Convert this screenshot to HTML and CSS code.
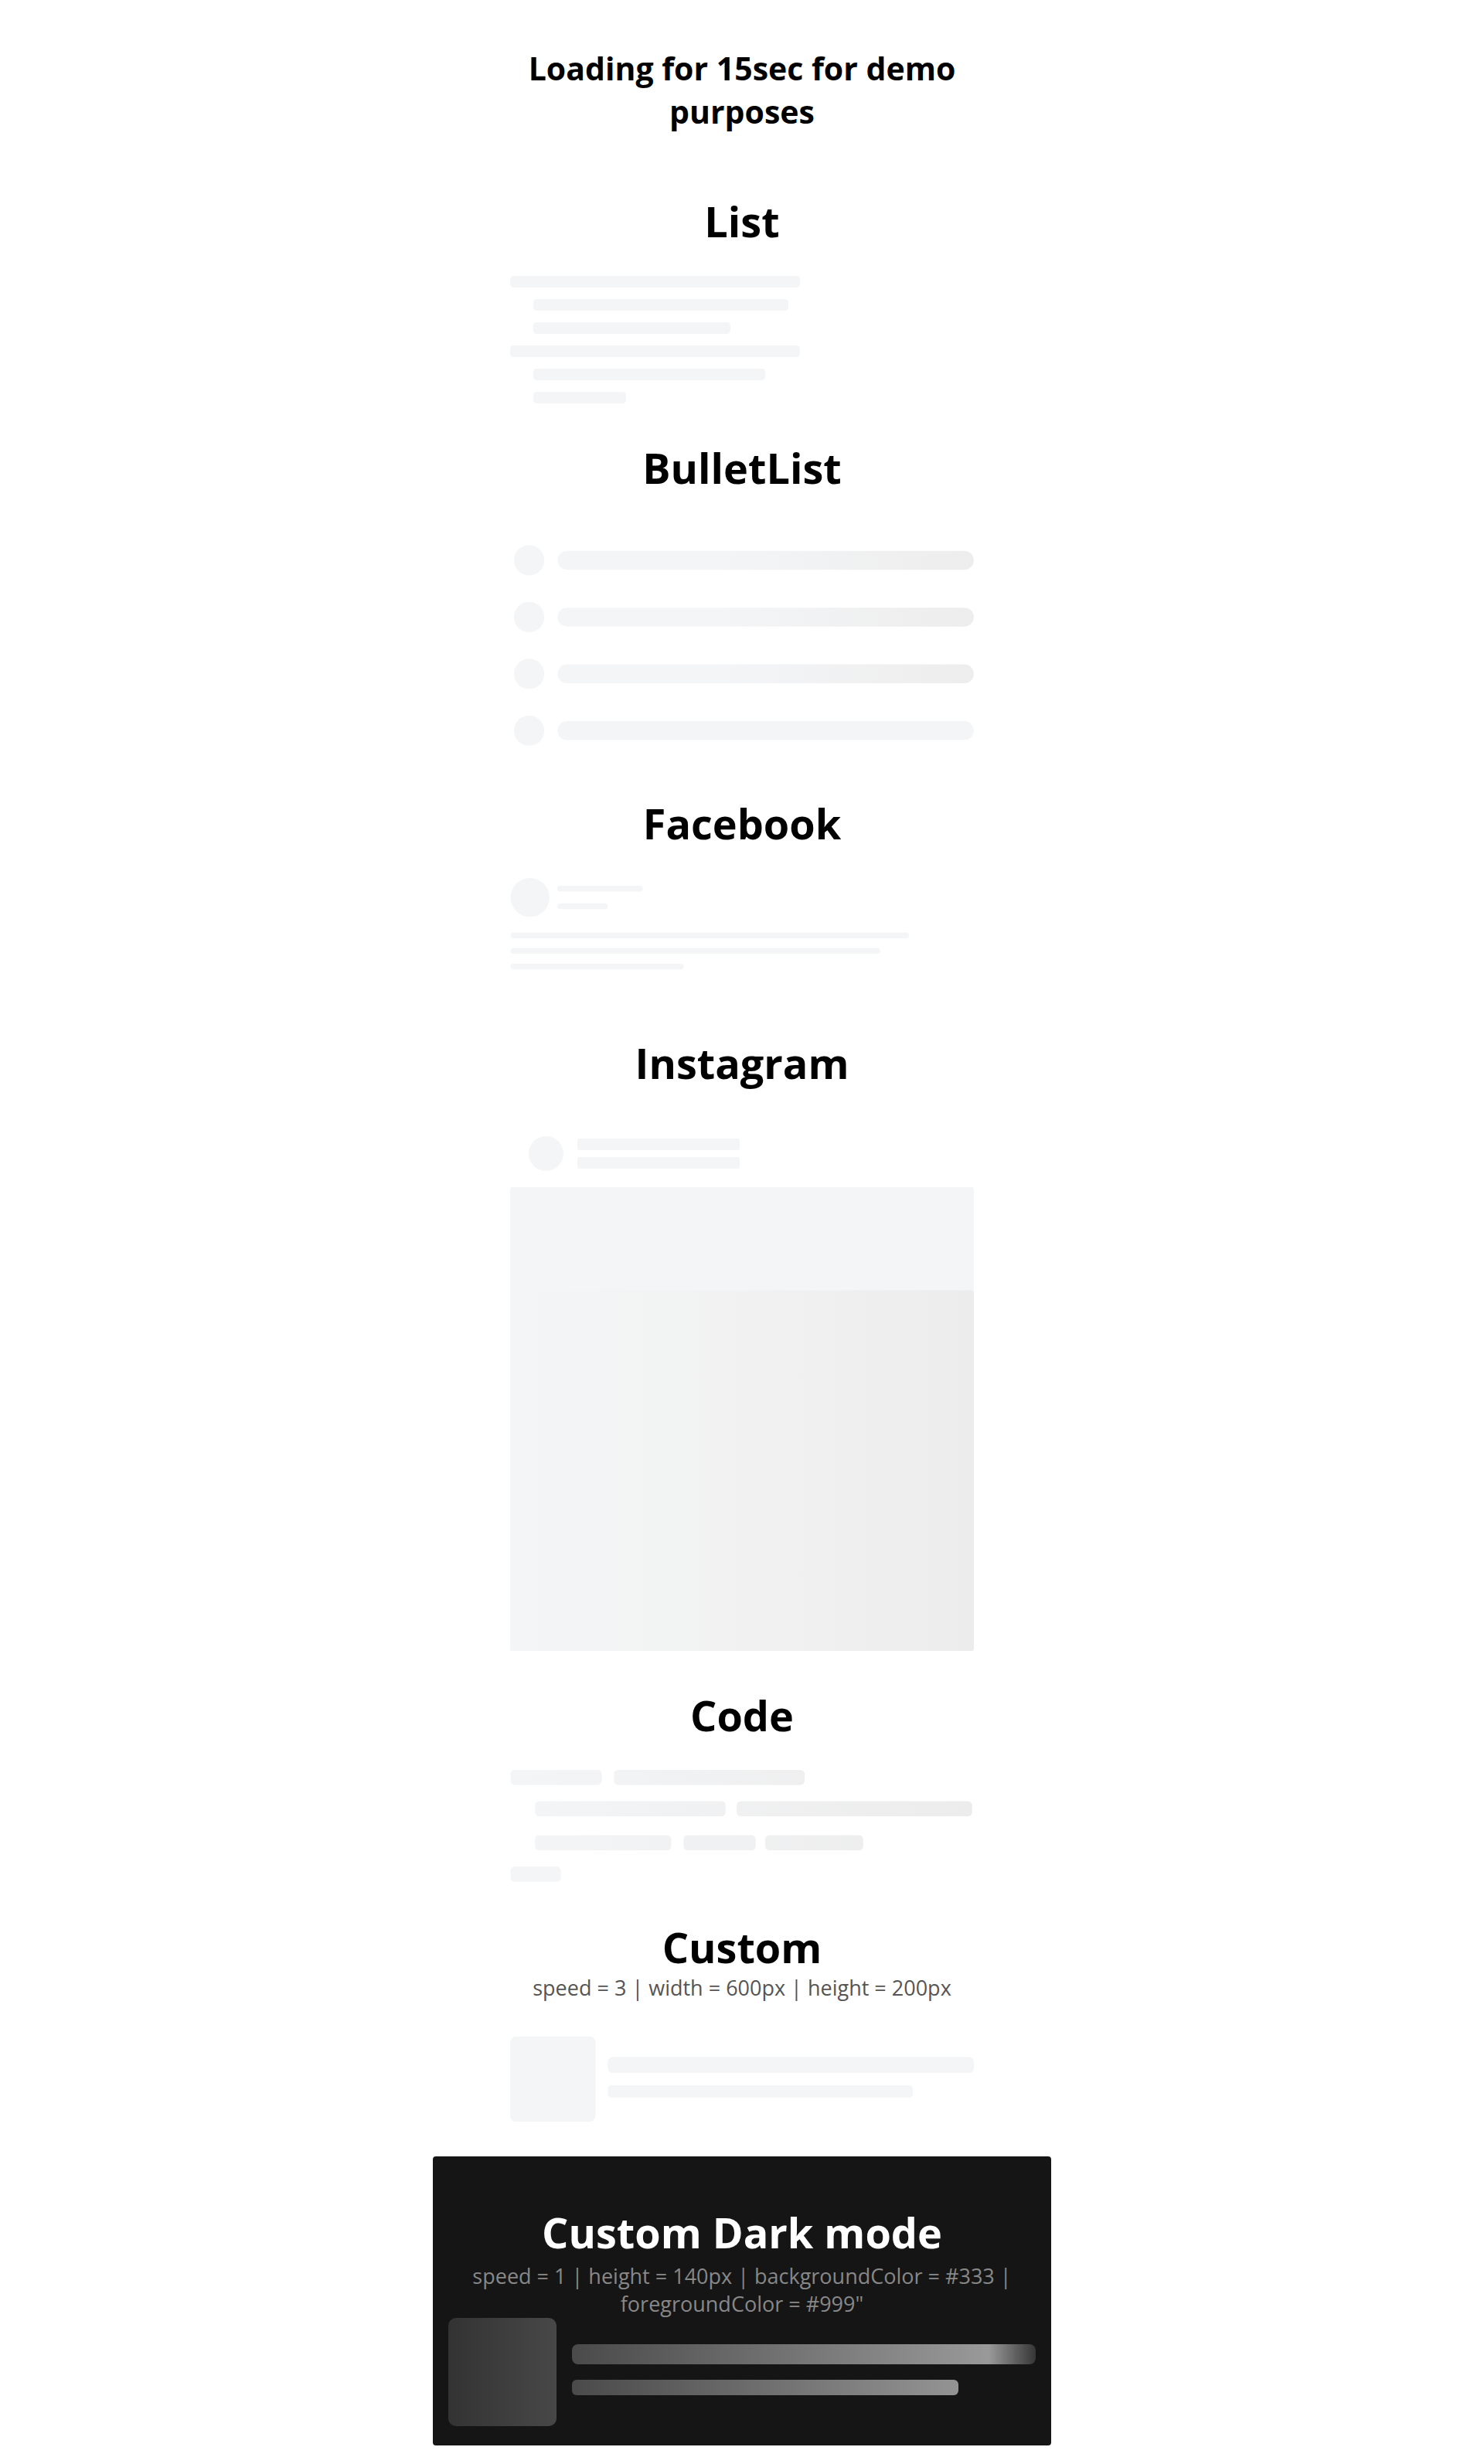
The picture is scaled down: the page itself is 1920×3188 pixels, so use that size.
FILE: index.html
```
<!doctype html>
<html>
    <head>
        <meta charset="utf-8">
        <title>Content loader demo</title>
        <link rel="stylesheet" href="styles.css">
    </head>
    <body>
        <div class="page">
            <h1 class="page-title">Loading for 15sec for demo purposes</h1>

            <div class="demo">
                <h2>List</h2>
                <svg class="loader loader-list" viewBox="0 0 400 110">
                    <rect x="0" y="0" rx="3" ry="3" width="250" height="10" />
                    <rect x="20" y="20" rx="3" ry="3" width="220" height="10" />
                    <rect x="20" y="40" rx="3" ry="3" width="170" height="10" />
                    <rect x="0" y="60" rx="3" ry="3" width="250" height="10" />
                    <rect x="20" y="80" rx="3" ry="3" width="200" height="10" />
                    <rect x="20" y="100" rx="3" ry="3" width="80" height="10" />
                </svg>
            </div>

            <div class="demo">
                <h2>BulletList</h2>
                <svg class="loader loader-bullets" viewBox="0 0 245 125">
                    <defs>
                        <linearGradient id="bulletShine" gradientUnits="userSpaceOnUse" x1="110" y1="0" x2="245" y2="0">
                            <stop offset="0" stop-color="#f4f5f7" />
                            <stop offset="1" stop-color="#ededed" />
                        </linearGradient>
                    </defs>
                    <circle cx="10" cy="20" r="8" />
                    <rect class="shine-bullet" x="25" y="15" rx="5" ry="5" width="220" height="10" />
                    <circle cx="10" cy="50" r="8" />
                    <rect class="shine-bullet" x="25" y="45" rx="5" ry="5" width="220" height="10" />
                    <circle cx="10" cy="80" r="8" />
                    <rect class="shine-bullet" x="25" y="75" rx="5" ry="5" width="220" height="10" />
                    <circle cx="10" cy="110" r="8" />
                    <rect x="25" y="105" rx="5" ry="5" width="220" height="10" />
                </svg>
            </div>

            <div class="demo">
                <h2>Facebook</h2>
                <svg class="loader loader-facebook" viewBox="0 0 476 124">
                    <rect x="48" y="8" width="88" height="6" rx="3" />
                    <rect x="48" y="26" width="52" height="6" rx="3" />
                    <rect x="0" y="56" width="410" height="6" rx="3" />
                    <rect x="0" y="72" width="380" height="6" rx="3" />
                    <rect x="0" y="88" width="178" height="6" rx="3" />
                    <circle cx="20" cy="20" r="20" />
                </svg>
            </div>

            <div class="demo">
                <h2>Instagram</h2>
                <svg class="loader loader-instagram" viewBox="0 0 400 460">
                    <defs>
                        <linearGradient id="instaShine" gradientUnits="userSpaceOnUse" x1="0" y1="0" x2="400" y2="0">
                            <stop offset="0" stop-color="#f4f5f7" />
                            <stop offset="0.45" stop-color="#f1f2f1" />
                            <stop offset="1" stop-color="#ececec" />
                        </linearGradient>
                    </defs>
                    <circle cx="31" cy="31" r="15" />
                    <rect x="58" y="18" rx="2" ry="2" width="140" height="10" />
                    <rect x="58" y="34" rx="2" ry="2" width="140" height="10" />
                    <rect x="0" y="60" rx="2" ry="2" width="400" height="400" />
                    <rect class="shine-insta" x="0" y="149" rx="2" ry="2" width="400" height="311" />
                </svg>
            </div>

            <div class="demo">
                <h2>Code</h2>
                <svg class="loader loader-code" viewBox="0 0 340 84">
                    <defs>
                        <linearGradient id="codeShine" gradientUnits="userSpaceOnUse" x1="0" y1="0" x2="340" y2="0">
                            <stop offset="0" stop-color="#f4f5f7" />
                            <stop offset="1" stop-color="#ececec" />
                        </linearGradient>
                    </defs>
                    <g class="shine-code">
                        <rect x="0" y="0" width="67" height="11" rx="3" />
                        <rect x="76" y="0" width="140" height="11" rx="3" />
                        <rect x="127" y="48" width="53" height="11" rx="3" />
                        <rect x="187" y="48" width="72" height="11" rx="3" />
                        <rect x="18" y="48" width="100" height="11" rx="3" />
                        <rect x="18" y="23" width="140" height="11" rx="3" />
                        <rect x="166" y="23" width="173" height="11" rx="3" />
                    </g>
                    <rect x="0" y="71" width="37" height="11" rx="3" />
                </svg>
            </div>

            <div class="demo demo-custom">
                <h2>Custom</h2>
                <p>speed = 3 | width = 600px | height = 200px</p>
                <svg class="loader loader-custom" viewBox="0 0 380 70">
                    <rect x="0" y="0" rx="5" ry="5" width="70" height="70" />
                    <rect x="80" y="17" rx="4" ry="4" width="300" height="13" />
                    <rect x="80" y="40" rx="3" ry="3" width="250" height="10" />
                </svg>
            </div>

            <div class="demo demo-custom demo-dark">
                <h2>Custom Dark mode</h2>
                <p>speed = 1 | height = 140px | backgroundColor = #333 | foregroundColor = #999"</p>
                <svg class="loader loader-dark" viewBox="0 0 380 70">
                    <defs>
                        <linearGradient id="darkShine" gradientUnits="userSpaceOnUse" x1="0" y1="0" x2="380" y2="0">
                            <stop offset="0" stop-color="#333" />
                            <stop offset="0.92" stop-color="#999" />
                            <stop offset="1" stop-color="#363636" />
                        </linearGradient>
                    </defs>
                    <rect x="0" y="0" rx="5" ry="5" width="70" height="70" />
                    <rect x="80" y="17" rx="4" ry="4" width="300" height="13" />
                    <rect x="80" y="40" rx="3" ry="3" width="250" height="10" />
                </svg>
            </div>
        </div>
    </body>
</html>
```

FILE: styles.css
```
body {
    margin:0;
    background:#fff;
    color:#000;
    font-family:"Open Sans", "Noto Sans", sans-serif;
}

.page {
    display:flex;
    flex-direction:column;
    align-items:center;
    padding:60px 0 21px;
}

.page-title {
    width:600px;
    margin:0 0 31px;
    font-size:41px;
    line-height:56px;
    font-weight:700;
    text-align:center;
}

.demo {
    width:600px;
    display:flex;
    flex-direction:column;
    align-items:center;
}

.demo h2 {
    margin:45px 0 33px;
    font-size:54px;
    line-height:76px;
    font-weight:700;
}

.demo p {
    margin:0;
    font-size:27px;
    line-height:36px;
    color:#555;
    text-align:center;
}

.demo-custom h2 { margin:43px 0 -3px; }

/* skeletons */
.loader { display:block; flex:none; }
.loader rect, .loader circle { fill:#f4f5f7; }

.loader-list { width:600px; height:165px; }
.loader-bullets { width:600px; height:306px; }
.loader-facebook { width:600px; height:156px; }
.loader-instagram { width:600px; height:690px; }
.loader-code { width:600px; height:148px; }
.loader-custom { width:600px; height:200px; }

.loader .shine-bullet { fill:url(#bulletShine); }
.loader .shine-insta { fill:url(#instaShine); }
.loader .shine-code rect { fill:url(#codeShine); }

/* dark variant */
.demo-dark {
    width:800px;
    box-sizing:border-box;
    padding:20px 20px 25px;
    background:#151515;
    border-radius:4px;
}
.demo-dark h2 { color:#fff; margin:40px 0 1px; }
.demo-dark p { color:#888; }

.loader-dark { width:760px; height:140px; }
.loader-dark rect { fill:url(#darkShine); }
```
